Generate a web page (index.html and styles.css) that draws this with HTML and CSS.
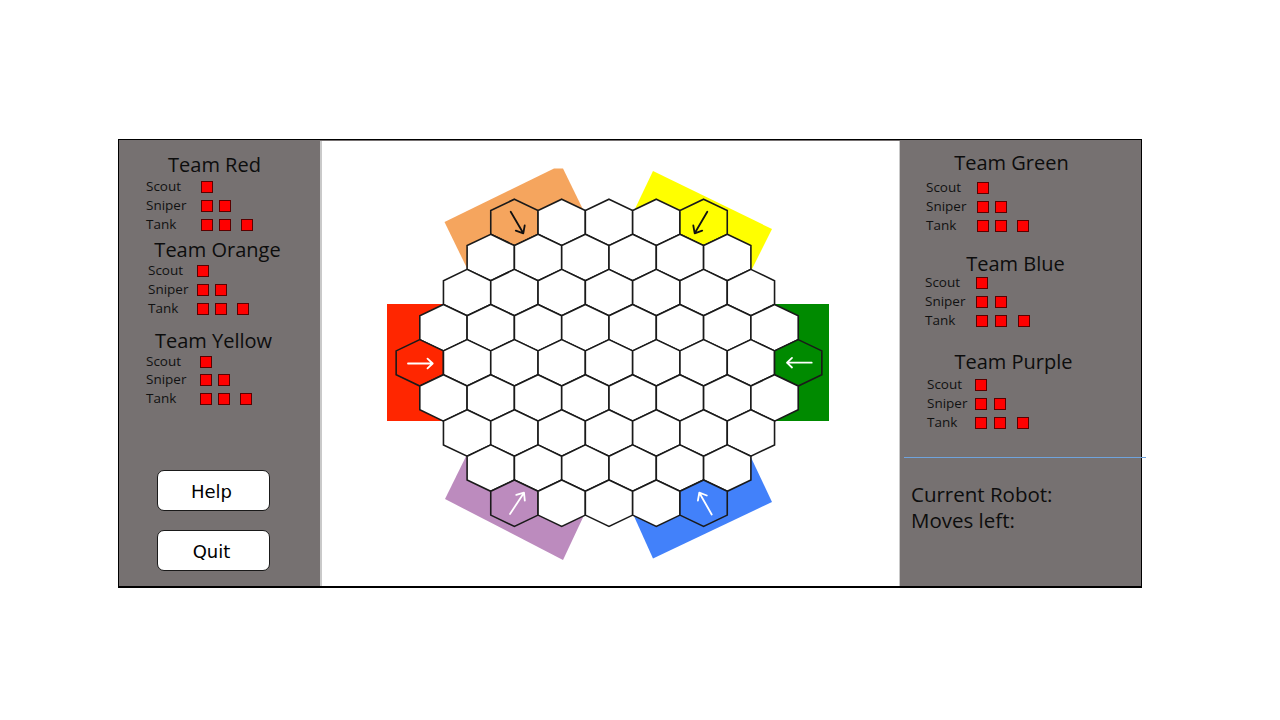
FILE: index.html
```html
<!DOCTYPE html>
<html>
<head>
<meta charset="utf-8">
<title>Hex Robots</title>
<link rel="stylesheet" href="styles.css">
</head>
<body>
<div class="frame">
  <aside class="panel left">
    <section class="team team-red">
      <h2 class="team-name">Team Red</h2>
      <div class="units">
        <div class="unit"><span class="unit-label">Scout</span><span class="sq"></span></div>
        <div class="unit"><span class="unit-label">Sniper</span><span class="sq"></span><span class="sq"></span></div>
        <div class="unit"><span class="unit-label">Tank</span><span class="sq"></span><span class="sq"></span><span class="sq far"></span></div>
      </div>
    </section>
    <section class="team team-orange">
      <h2 class="team-name">Team Orange</h2>
      <div class="units">
        <div class="unit"><span class="unit-label">Scout</span><span class="sq"></span></div>
        <div class="unit"><span class="unit-label">Sniper</span><span class="sq"></span><span class="sq"></span></div>
        <div class="unit"><span class="unit-label">Tank</span><span class="sq"></span><span class="sq"></span><span class="sq far"></span></div>
      </div>
    </section>
    <section class="team team-yellow">
      <h2 class="team-name">Team Yellow</h2>
      <div class="units">
        <div class="unit"><span class="unit-label">Scout</span><span class="sq"></span></div>
        <div class="unit"><span class="unit-label">Sniper</span><span class="sq"></span><span class="sq"></span></div>
        <div class="unit"><span class="unit-label">Tank</span><span class="sq"></span><span class="sq"></span><span class="sq far"></span></div>
      </div>
    </section>
    <div class="buttons">
      <button class="btn">Help</button>
      <button class="btn">Quit</button>
    </div>
  </aside>

  <main class="board">
    <svg class="board-svg" width="577" height="445" viewBox="322 141 577 445" xmlns="http://www.w3.org/2000/svg">
      <defs>
        <polygon id="h" points="0,-23.2 23.65,-11.9 23.65,11.9 0,23.2 -23.65,11.9 -23.65,-11.9"/>
      </defs>
      <!-- team start zones -->
      <polygon fill="#F5A55E" points="444.5,222 554,168.5 563,168.5 594,232 481,297"/>
      <polygon fill="#FFFF00" points="653,171 772,229 738,297 624,232"/>
      <rect fill="#FF2600" x="387" y="304" width="70" height="117"/>
      <rect fill="#008A00" x="762" y="304" width="67" height="117"/>
      <polygon fill="#BC8BBE" points="445,499 563,560 594,494 480,428"/>
      <polygon fill="#4281FA" points="653,558.5 772,502 738,430 624,494"/>

      <g class="hexes" fill="#fff" stroke="#1a1a1a" stroke-width="1.6">
        <!-- row -4 -->
        <use href="#h" x="514.4" y="222.4" fill="#F5A55E"/>
        <use href="#h" x="561.7" y="222.4"/>
        <use href="#h" x="609" y="222.4"/>
        <use href="#h" x="656.3" y="222.4"/>
        <use href="#h" x="703.6" y="222.4" fill="#FFFF00"/>
        <!-- row -3 -->
        <use href="#h" x="490.75" y="257.5"/>
        <use href="#h" x="538.05" y="257.5"/>
        <use href="#h" x="585.35" y="257.5"/>
        <use href="#h" x="632.65" y="257.5"/>
        <use href="#h" x="679.95" y="257.5"/>
        <use href="#h" x="727.25" y="257.5"/>
        <!-- row -2 -->
        <use href="#h" x="467.1" y="292.6"/>
        <use href="#h" x="514.4" y="292.6"/>
        <use href="#h" x="561.7" y="292.6"/>
        <use href="#h" x="609" y="292.6"/>
        <use href="#h" x="656.3" y="292.6"/>
        <use href="#h" x="703.6" y="292.6"/>
        <use href="#h" x="750.9" y="292.6"/>
        <!-- row -1 -->
        <use href="#h" x="443.45" y="327.7"/>
        <use href="#h" x="490.75" y="327.7"/>
        <use href="#h" x="538.05" y="327.7"/>
        <use href="#h" x="585.35" y="327.7"/>
        <use href="#h" x="632.65" y="327.7"/>
        <use href="#h" x="679.95" y="327.7"/>
        <use href="#h" x="727.25" y="327.7"/>
        <use href="#h" x="774.55" y="327.7"/>
        <!-- row 0 -->
        <use href="#h" x="419.8" y="362.8" fill="#FF2600"/>
        <use href="#h" x="467.1" y="362.8"/>
        <use href="#h" x="514.4" y="362.8"/>
        <use href="#h" x="561.7" y="362.8"/>
        <use href="#h" x="609" y="362.8"/>
        <use href="#h" x="656.3" y="362.8"/>
        <use href="#h" x="703.6" y="362.8"/>
        <use href="#h" x="750.9" y="362.8"/>
        <use href="#h" x="798.2" y="362.8" fill="#008A00"/>
        <!-- row 1 -->
        <use href="#h" x="443.45" y="397.9"/>
        <use href="#h" x="490.75" y="397.9"/>
        <use href="#h" x="538.05" y="397.9"/>
        <use href="#h" x="585.35" y="397.9"/>
        <use href="#h" x="632.65" y="397.9"/>
        <use href="#h" x="679.95" y="397.9"/>
        <use href="#h" x="727.25" y="397.9"/>
        <use href="#h" x="774.55" y="397.9"/>
        <!-- row 2 -->
        <use href="#h" x="467.1" y="433"/>
        <use href="#h" x="514.4" y="433"/>
        <use href="#h" x="561.7" y="433"/>
        <use href="#h" x="609" y="433"/>
        <use href="#h" x="656.3" y="433"/>
        <use href="#h" x="703.6" y="433"/>
        <use href="#h" x="750.9" y="433"/>
        <!-- row 3 -->
        <use href="#h" x="490.75" y="468.1"/>
        <use href="#h" x="538.05" y="468.1"/>
        <use href="#h" x="585.35" y="468.1"/>
        <use href="#h" x="632.65" y="468.1"/>
        <use href="#h" x="679.95" y="468.1"/>
        <use href="#h" x="727.25" y="468.1"/>
        <!-- row 4 -->
        <use href="#h" x="514.4" y="503.2" fill="#BC8BBE"/>
        <use href="#h" x="561.7" y="503.2"/>
        <use href="#h" x="609" y="503.2"/>
        <use href="#h" x="656.3" y="503.2"/>
        <use href="#h" x="703.6" y="503.2" fill="#4281FA"/>
      </g>

      <!-- direction arrows -->
      <g fill="none" stroke-width="1.8" stroke-linecap="round" stroke-linejoin="round">
        <g stroke="#111">
          <path d="M510.7,211.7 L523.3,233.3 M524.7,225.5 L523.3,233.3 L515.8,230.6"/>
          <path d="M707.3,211.7 L694.7,233.3 M693.3,225.5 L694.7,233.3 L702.2,230.6"/>
        </g>
        <g stroke="#fff">
          <path d="M408,363.5 L432.7,363.5 M427.5,358.7 L432.7,363.5 L427.5,368.3"/>
          <path d="M811.7,362.7 L787,362.7 M792,357.9 L787,362.7 L792,367.5"/>
          <path d="M510,514 L524,492.7 M516.3,494.9 L524,492.7 L524.8,500.7"/>
          <path d="M711.7,514.5 L699.3,492.7 M697.9,500.6 L699.3,492.7 L706.8,495.5"/>
        </g>
      </g>
    </svg>
  </main>

  <aside class="panel right">
    <section class="team team-green">
      <h2 class="team-name">Team Green</h2>
      <div class="units">
        <div class="unit"><span class="unit-label">Scout</span><span class="sq"></span></div>
        <div class="unit"><span class="unit-label">Sniper</span><span class="sq"></span><span class="sq"></span></div>
        <div class="unit"><span class="unit-label">Tank</span><span class="sq"></span><span class="sq"></span><span class="sq far"></span></div>
      </div>
    </section>
    <section class="team team-blue">
      <h2 class="team-name">Team Blue</h2>
      <div class="units">
        <div class="unit"><span class="unit-label">Scout</span><span class="sq"></span></div>
        <div class="unit"><span class="unit-label">Sniper</span><span class="sq"></span><span class="sq"></span></div>
        <div class="unit"><span class="unit-label">Tank</span><span class="sq"></span><span class="sq"></span><span class="sq far"></span></div>
      </div>
    </section>
    <section class="team team-purple">
      <h2 class="team-name">Team Purple</h2>
      <div class="units">
        <div class="unit"><span class="unit-label">Scout</span><span class="sq"></span></div>
        <div class="unit"><span class="unit-label">Sniper</span><span class="sq"></span><span class="sq"></span></div>
        <div class="unit"><span class="unit-label">Tank</span><span class="sq"></span><span class="sq"></span><span class="sq far"></span></div>
      </div>
    </section>
    <div class="divider"></div>
    <div class="status">
      <div class="status-line">Current Robot:</div>
      <div class="status-line">Moves left:</div>
    </div>
  </aside>
</div>
</body>
</html>
```

FILE: styles.css
```css
html, body {
  margin: 0;
  padding: 0;
  background: #ffffff;
}

body {
  font-family: "Open Sans", "Liberation Sans", sans-serif;
  color: #0d0d0d;
}

.frame {
  margin: 139px 0 0 118px;
  width: 1024px;
  height: 449px;
  box-sizing: border-box;
  border: 1px solid #000;
  border-bottom-width: 2px;
  display: flex;
  background: #767171;
}

.panel {
  background: #767171;
  box-sizing: border-box;
}

.left {
  width: 201px;
  padding-top: 16px;
  display: flex;
  flex-direction: column;
}

.right {
  width: 241px;
  padding-top: 14px;
}

.board {
  width: 580px;
  height: 445px;
  margin-top: 1px;
  box-sizing: border-box;
  background: #ffffff;
  border-left: 2px solid #c9c9c9;
  border-right: 1px solid #c9c9c9;
}

.board-svg {
  display: block;
}

/* team blocks */
.team-name {
  margin: 0;
  font-size: 20px;
  line-height: 18px;
  font-weight: 400;
  text-align: center;
  padding-right: 10px;
  color: #0d0d0d;
}

.unit {
  display: flex;
  align-items: center;
  height: 19px;
}

.unit-label {
  font-size: 13.5px;
  line-height: 16px;
  flex: none;
  color: #111;
}

.sq {
  width: 12px;
  height: 12px;
  box-sizing: border-box;
  background: #ff0000;
  border: 1px solid #5a0000;
  flex: none;
  margin-top: 2px;
}

.sq + .sq {
  margin-left: 6px;
}

.sq.far {
  margin-left: 10px;
}

/* left teams */
.team-red .team-name { margin-bottom: 2px; }
.team-red .units { padding-left: 27px; }
.team-red .unit-label { width: 55px; }

.team-orange { margin-top: 8px; }
.team-orange .team-name { margin-bottom: 1px; padding-right: 4px; }
.team-orange .units { padding-left: 29px; }
.team-orange .unit-label { width: 49px; }

.team-yellow { margin-top: 15px; }
.team-yellow .team-name { margin-bottom: 1.5px; padding-right: 12px; }
.team-yellow .units { padding-left: 27px; }
.team-yellow .unit-label { width: 54px; }
.team-yellow .unit { height: 18.5px; }

/* right teams */
.right .team-name { padding-right: 18px; }

.team-green .team-name { margin-bottom: 5px; }
.team-green .units { padding-left: 26px; }
.team-green .unit-label { width: 51px; }

.team-blue { margin-top: 21px; }
.team-blue .team-name { margin-bottom: -1px; padding-right: 10px; }
.team-blue .units { padding-left: 25px; }
.team-blue .unit-label { width: 51px; }
.team-blue .sq + .sq { margin-left: 7px; }
.team-blue .sq.far { margin-left: 11px; }

.team-purple { margin-top: 24px; }
.team-purple .team-name { margin-bottom: 3px; padding-right: 14px; }
.team-purple .units { padding-left: 27px; }
.team-purple .unit-label { width: 48px; }
.team-purple .sq + .sq { margin-left: 7px; }
.team-purple .sq.far { margin-left: 11px; }

/* buttons */
.buttons {
  margin-top: 62.5px;
  display: flex;
  flex-direction: column;
  gap: 19px;
  padding-left: 38px;
}

.btn {
  width: 113px;
  height: 41px;
  box-sizing: border-box;
  margin: 0;
  padding: 2px 4px 0 0;
  background: #ffffff;
  border: 1px solid #1a1a1a;
  border-radius: 7px;
  font-family: "DejaVu Sans", Verdana, sans-serif;
  font-size: 18px;
  color: #000;
  display: flex;
  align-items: center;
  justify-content: center;
}

/* right status */
.divider {
  margin: 26px -5px 0 4px;
  height: 1px;
  background: #6fa3dc;
}

.status {
  margin-top: 23px;
  padding-left: 11px;
}

.status-line {
  font-size: 20.5px;
  line-height: 26px;
  color: #0d0d0d;
}
```
